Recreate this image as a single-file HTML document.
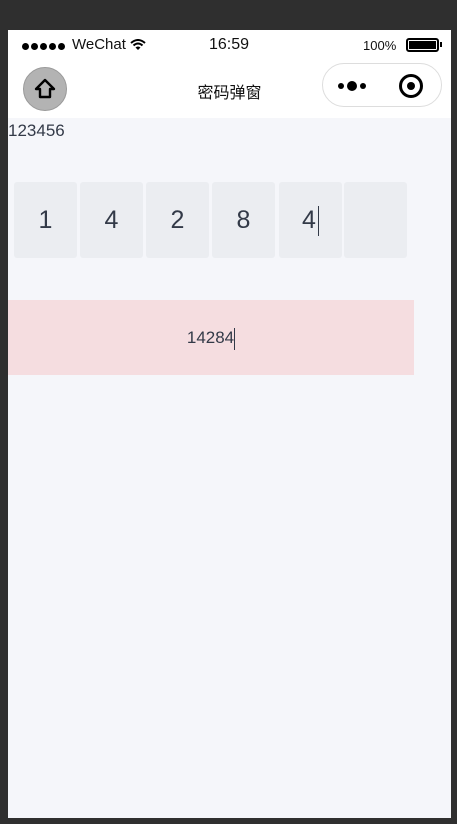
<!DOCTYPE html>
<html><head><meta charset="utf-8"><style>
*{margin:0;padding:0;box-sizing:border-box}
body{width:457px;height:824px;background:#2f2f2f;position:relative;overflow:hidden;font-family:"Liberation Sans","Noto Sans CJK SC",sans-serif}
#ph{position:absolute;left:8px;top:30px;width:443px;height:788px;background:#f5f6fa}
#sb{position:absolute;left:0;top:0;width:443px;height:30px;background:#fff;font-size:15px;color:#111}
#nav{position:absolute;left:0;top:30px;width:443px;height:58px;background:#fff}
.box{position:absolute;top:152px;width:63px;height:76px;background:#ebedf1;border-radius:3px;font-size:25px;color:#333a48;text-align:center;line-height:76px}
.d{position:absolute;top:13px;width:7px;height:7px;border-radius:50%;background:#000}
</style></head><body>
<div id="ph">
<div id="sb">
<div class="d" style="left:14px"></div><div class="d" style="left:23px"></div><div class="d" style="left:32px"></div><div class="d" style="left:41px"></div><div class="d" style="left:50px"></div>
<div style="position:absolute;left:64px;top:6px">WeChat</div>
<svg style="position:absolute;left:122px;top:9px" width="16" height="12" viewBox="0 0 16 12"><path d="M1 4 Q8 -2 15 4" stroke="#000" stroke-width="2" fill="none"/><path d="M3.5 6.5 Q8 2.5 12.5 6.5" stroke="#000" stroke-width="2" fill="none"/><path d="M8 11 L5.5 8.5 Q8 6.5 10.5 8.5Z" fill="#000"/></svg>
<div style="position:absolute;left:201px;top:6px;font-size:16px">16:59</div>
<div style="position:absolute;left:355px;top:8px;font-size:13px">100%</div>
<div style="position:absolute;left:398px;top:8px;width:33px;height:14px;border:2px solid #000;border-radius:3px;padding:1px"><div style="width:100%;height:100%;background:#000"></div></div>
<div style="position:absolute;left:432px;top:12px;width:2px;height:5px;background:#000"></div>
</div>
<div id="nav">
<div style="position:absolute;left:15px;top:7px;width:44px;height:44px;border-radius:50%;background:#b3b3b3;border:1px solid #999"></div>
<svg style="position:absolute;left:25px;top:17px" width="24" height="24" viewBox="0 0 24 24"><path d="M12 3 L3 12 H7 V20 H17 V12 H21 Z" stroke="#000" stroke-width="2.4" fill="none" stroke-linejoin="round"/></svg>
<div style="position:absolute;left:0;width:443px;top:19px;text-align:center;font-size:16px;color:#111">密码弹窗</div>
<div style="position:absolute;left:314px;top:3px;width:120px;height:44px;border:1px solid #ddd;border-radius:22px;background:#fff"></div>
<div style="position:absolute;left:330px;top:23px;width:6px;height:6px;border-radius:50%;background:#000"></div>
<div style="position:absolute;left:339px;top:21px;width:10px;height:10px;border-radius:50%;background:#000"></div>
<div style="position:absolute;left:352px;top:23px;width:6px;height:6px;border-radius:50%;background:#000"></div>
<div style="position:absolute;left:391px;top:14px;width:24px;height:24px;border-radius:50%;border:3px solid #000"></div>
<div style="position:absolute;left:399px;top:22px;width:8px;height:8px;border-radius:50%;background:#000"></div>
</div>
<div style="position:absolute;left:0;top:91px;font-size:17px;color:#333a48">123456</div>
<div class="box" style="left:6px">1</div>
<div class="box" style="left:72px">4</div>
<div class="box" style="left:138px">2</div>
<div class="box" style="left:204px">8</div>
<div class="box" style="left:271px">4<span style="display:inline-block;width:1px;height:30px;background:#333a48;vertical-align:middle;margin-left:2px"></span></div>
<div class="box" style="left:336px"></div>
<div style="position:absolute;left:0;top:270px;width:406px;height:75px;background:#f5dde0;text-align:center;line-height:75px;font-size:17px;color:#333a48">14284<span style="display:inline-block;width:1px;height:22px;background:#333a48;vertical-align:middle"></span></div>
</div>
</body></html>
